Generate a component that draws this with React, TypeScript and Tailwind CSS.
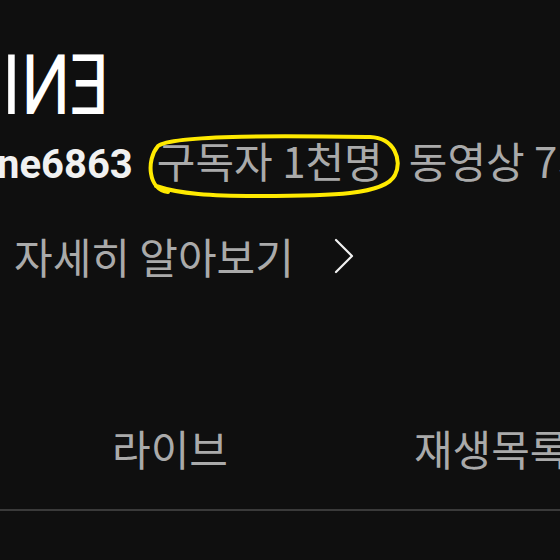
import React from "react";

export default function App() {
  return (
    <div className="relative w-[560px] h-[560px] overflow-hidden bg-[#0f0f0f] font-['Roboto','Noto_Sans_CJK_KR',sans-serif]">
      <div className="flex flex-col">
        <div className="pt-[37px] pl-[2px] text-[69px] leading-none text-white whitespace-nowrap flex origin-top scale-y-[1.2]">
          <span>I</span>
          <span className="inline-block -scale-x-100">N</span>
          <span className="inline-block -scale-x-100">E</span>
        </div>
        <div className="mt-[33px] flex items-baseline whitespace-nowrap text-[40px] leading-none">
          <span className="font-bold text-[#f1f1f1] -ml-[3px]">ne6863</span>
          <span className="ml-[24px] text-[#aaaaaa] text-[42px] font-['Noto_Sans_CJK_KR',sans-serif]">구독자 1천명</span>
          <span className="ml-[26px] text-[#aaaaaa] text-[42px] font-['Noto_Sans_CJK_KR',sans-serif]">동영상 7개</span>
        </div>
        <div className="mt-[50px] pl-[14px] flex items-center whitespace-nowrap">
          <span className="text-[42px] leading-none text-[#aaaaaa] font-['Noto_Sans_CJK_KR',sans-serif]">자세히 알아보기</span>
          <svg className="ml-[38px]" width="24" height="36" viewBox="0 0 24 36" fill="none">
            <polyline points="4,2 20,18 4,34" stroke="#f1f1f1" strokeWidth="2.2" strokeLinecap="round" strokeLinejoin="round" />
          </svg>
        </div>
        <div className="mt-[150px] flex whitespace-nowrap text-[42px] leading-none text-[#aaaaaa] font-['Noto_Sans_CJK_KR',sans-serif]">
          <span className="ml-[112px]">라이브</span>
          <span className="ml-[186px]">재생목록</span>
        </div>
        <div className="mt-[40px] h-[2px] bg-[#3a3a3a]" />
      </div>
      <svg className="absolute left-0 top-0 pointer-events-none" width="560" height="560" viewBox="0 0 560 560" fill="none">
        <path
          d="M 168 192 C 148 190, 146 160, 158 146 C 173 134, 300 136, 370 137 C 395 138, 402 160, 395 175 C 385 195, 330 196, 260 196 C 210 196, 180 194, 156 186"
          stroke="#ffea00"
          strokeWidth="4"
          strokeLinecap="round"
        />
      </svg>
    </div>
  );
}
